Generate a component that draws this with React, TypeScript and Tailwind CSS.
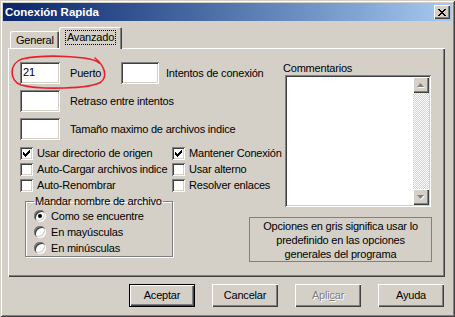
import React from 'react'

const sunken =
  'bg-white shadow-[inset_1px_1px_#808080,inset_-1px_-1px_#ffffff,inset_2px_2px_#404040,inset_-2px_-2px_#d4d0c8]'
const raised =
  'bg-[#d4d0c8] shadow-[inset_1px_1px_#ffffff,inset_-1px_-1px_#404040,inset_-2px_-2px_#808080]'

function Field({ value, w = 40 }: { value?: string; w?: number }) {
  return (
    <div
      className={`${sunken} h-[22px] shrink-0 pl-[3px] pt-[4px] text-black`}
      style={{ width: w }}
    >
      {value}
    </div>
  )
}

// classic 7x7 pixel check mark
const checkPixels = [
  '......X',
  '.....XX',
  'X...XXX',
  'XX.XXX.',
  'XXXXX..',
  '.XXX...',
  '..X....',
]

function CheckBox({ checked, label }: { checked?: boolean; label: string }) {
  return (
    <div className="flex h-[16px] items-center gap-[4px] whitespace-nowrap">
      <div className={`${sunken} flex h-[13px] w-[13px] shrink-0 items-center justify-center`}>
        {checked && (
          <svg width="7" height="7" viewBox="0 0 7 7" shapeRendering="crispEdges">
            {checkPixels.flatMap((row, y) =>
              row.split('').map((c, x) =>
                c === 'X' ? <rect key={`${x}-${y}`} x={x} y={y} width="1" height="1" fill="#000" /> : null
              )
            )}
          </svg>
        )}
      </div>
      <span>{label}</span>
    </div>
  )
}

function Radio({ checked, label }: { checked?: boolean; label: string }) {
  return (
    <div className="flex h-[16px] items-center gap-[5px] whitespace-nowrap">
      <div className="flex h-[12px] w-[12px] shrink-0 items-center justify-center rounded-full bg-white shadow-[inset_1px_1px_#808080,inset_-1px_-1px_#ffffff,inset_2px_2px_#404040,inset_-2px_-2px_#d4d0c8]">
        {checked && <div className="h-[4px] w-[4px] rounded-full bg-black" />}
      </div>
      <span>{label}</span>
    </div>
  )
}

function ScrollArrow({ up }: { up?: boolean }) {
  return (
    <div className={`${raised} flex h-[16px] w-[16px] items-center justify-center`}>
      <svg width="8" height="5" viewBox="0 0 8 5">
        <polygon points={up ? '4,1 8,5 1,5' : '1,1 8,1 4,5'} fill="#ffffff" />
        <polygon points={up ? '3.5,0 7,4 0,4' : '0,0 7,0 3.5,4'} fill="#808080" />
      </svg>
    </div>
  )
}

function Button({
  children,
  isDefault,
  disabled,
}: {
  children: React.ReactNode
  isDefault?: boolean
  disabled?: boolean
}) {
  return (
    <div
      className={`flex h-[23px] w-[66px] items-center justify-center ${
        isDefault
          ? 'bg-[#d4d0c8] shadow-[inset_1px_1px_#000,inset_-1px_-1px_#000,inset_2px_2px_#fff,inset_-2px_-2px_#404040,inset_-3px_-3px_#808080]'
          : raised
      } ${disabled ? 'text-[#808080] [text-shadow:1px_1px_0_#fff]' : 'text-black'}`}
    >
      {children}
    </div>
  )
}

export default function App() {
  return (
    <div className="relative h-[317px] w-[455px] overflow-hidden bg-[#d4d0c8] p-[3px] text-[11px] leading-[13px] tracking-[-0.2px] text-black [font-family:'Liberation_Sans',Arial,sans-serif] shadow-[inset_1px_1px_#d4d0c8,inset_-1px_-1px_#404040,inset_2px_2px_#ffffff,inset_-2px_-2px_#808080]">
      {/* Title bar */}
      <div className="flex h-[18px] items-center justify-between bg-linear-to-r from-[#0a246a] to-[#a6caf0] pl-[2px] pr-[2px]">
        <span className="text-[11.5px] font-bold tracking-normal text-white">Conexión Rapida</span>
        <div className={`${raised} flex h-[14px] w-[16px] items-center justify-center`}>
          <svg width="8" height="7" viewBox="0 0 8 7" shapeRendering="crispEdges">
            <path d="M0 0h2v1h-2zM6 0h2v1h-2zM1 1h2v1h-2zM5 1h2v1h-2zM2 2h4v1h-4zM3 3h2v1h-2zM2 4h4v1h-4zM1 5h2v1h-2zM5 5h2v1h-2zM0 6h2v1h-2zM6 6h2v1h-2z" fill="#000" />
          </svg>
        </div>
      </div>

      <div className="flex flex-col pl-[5px] pt-[7px]">
        {/* Tabs */}
        <div className="flex h-[21px] items-end pl-[2px]">
          <div className="flex h-[18px] w-[49px] items-center rounded-t-[2px] pl-[6px] shadow-[inset_1px_1px_#ffffff,inset_-1px_0_#404040,inset_-2px_0_#808080]">
            General
          </div>
          <div className="relative z-10 flex h-[22px] w-[63px] items-start justify-center rounded-t-[2px] bg-[#d4d0c8] pt-[3px] shadow-[inset_1px_1px_#ffffff,inset_-1px_0_#404040,inset_-2px_0_#808080]">
            <span className="border border-dotted border-black px-[1px] leading-[13px]">Avanzado</span>
          </div>
        </div>

        {/* Panel */}
        <div className="-mt-[1px] flex h-[229px] w-[437px] pl-[12px] pt-[14px] shadow-[inset_1px_1px_#ffffff,inset_-1px_-1px_#404040,inset_-2px_-2px_#808080]">
          {/* Left column */}
          <div className="flex w-[263px] shrink-0 flex-col">
            <div className="flex items-center whitespace-nowrap">
              <Field value="21" />
              <span className="ml-[10px] w-[51px]">Puerto</span>
              <Field w={38} />
              <span className="ml-[7px]">Intentos de conexión</span>
            </div>
            <div className="mt-[6px] flex items-center whitespace-nowrap">
              <Field />
              <span className="ml-[10px]">Retraso entre intentos</span>
            </div>
            <div className="mt-[6px] flex items-center whitespace-nowrap">
              <Field />
              <span className="ml-[10px]">Tamaño maximo de archivos indice</span>
            </div>

            <div className="mt-[5px] grid grid-cols-[152px_auto]">
              <CheckBox checked label="Usar directorio de origen" />
              <CheckBox checked label="Mantener Conexión" />
              <CheckBox label="Auto-Cargar archivos indice" />
              <CheckBox label="Usar alterno" />
              <CheckBox label="Auto-Renombrar" />
              <CheckBox label="Resolver enlaces" />
            </div>

            <fieldset className="ml-[5px] mt-[2px] h-[62px] w-[148px] border border-[#808080] pl-[8px] shadow-[1px_1px_#ffffff,inset_1px_1px_#ffffff]">
              <legend className="px-[1px] leading-[13px]">Mandar nombre de archivo</legend>
              <Radio checked label="Como se encuentre" />
              <Radio label="En mayúsculas" />
              <Radio label="En minúsculas" />
            </fieldset>
          </div>

          {/* Right column */}
          <div className="flex flex-col">
            <span className="h-[13px] leading-[13px]">Commentarios</span>
            <div className={`${sunken} ml-[2px] flex h-[132px] w-[146px] justify-end p-[2px]`}>
              <div className="flex w-[16px] flex-col bg-[repeating-conic-gradient(#d4d0c8_0%_25%,#ffffff_0%_50%)] bg-[length:2px_2px]">
                <ScrollArrow up />
                <div className="flex-1" />
                <ScrollArrow />
              </div>
            </div>
            <div className="-ml-[34px] mt-[10px] flex h-[45px] w-[183px] flex-col items-center justify-center border border-[#808080] text-center leading-[14px]">
              <span>Opciones en gris significa usar lo</span>
              <span>predefinido en las opciones</span>
              <span>generales del programa</span>
            </div>
          </div>
        </div>

        {/* Buttons */}
        <div className="mt-[7px] flex w-[437px] justify-end gap-[17px] pr-[1px]">
          <Button isDefault>Aceptar</Button>
          <Button>Cancelar</Button>
          <Button disabled>
            <span>
              Apli<span className="underline">c</span>ar
            </span>
          </Button>
          <Button>Ayuda</Button>
        </div>
      </div>

      {/* Red hand-drawn mark around the port field */}
      <svg className="pointer-events-none absolute left-0 top-0" width="455" height="317">
        <path
          d="M99 63 C 92 56, 45 54, 22 59 C 9 63, 9 81, 21 85 C 40 90, 90 89, 101 82 C 107 77, 106 67, 95 58"
          fill="none"
          stroke="#e8202a"
          strokeWidth="1.6"
          strokeLinecap="round"
        />
      </svg>
    </div>
  )
}
